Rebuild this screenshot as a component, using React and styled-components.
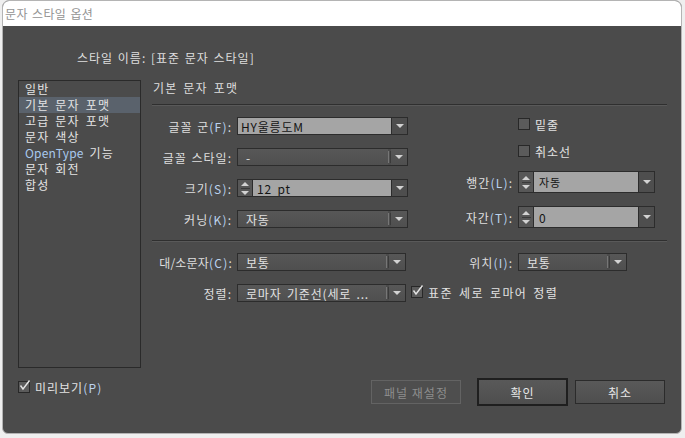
import styled, { createGlobalStyle } from "styled-components";

const GlobalStyle = createGlobalStyle`
  html, body {
    margin: 0;
    padding: 0;
    background: #efefef;
  }
  body {
    font-family: "Noto Sans CJK KR", "Noto Sans", sans-serif;
    font-size: 12px;
  }
  * { box-sizing: border-box; }
`;

const LIST_ITEMS = [
  { label: "일반" },
  { label: "기본 문자 포맷", selected: true },
  { label: "고급 문자 포맷" },
  { label: "문자 색상" },
  { label: "OpenType 기능", latin: "OpenType" },
  { label: "문자 회전" },
  { label: "합성" },
];

const Triangle = ({ up }) => <St.Tri $up={up} />;

const Select = ({ width, height, light, value, pad, small }) => (
  <St.SelectBox $w={width} $h={height}>
    <St.Value $light={light} $pad={pad} $small={small}>
      {value}
    </St.Value>
    {!light && <St.Divider />}
    <St.ArrowBtn $light={light}>
      <Triangle />
    </St.ArrowBtn>
  </St.SelectBox>
);

const Spinner = ({ width, height, value, pad, small }) => (
  <St.SelectBox $w={width} $h={height}>
    <St.Stepper>
      <Triangle up />
      <St.StepLine />
      <Triangle />
    </St.Stepper>
    <St.Value $light $pad={pad} $small={small}>
      {value}
    </St.Value>
    <St.ArrowBtn $light>
      <Triangle />
    </St.ArrowBtn>
  </St.SelectBox>
);

const CheckBox = ({ checked }) => (
  <St.Check>
    {checked && (
      <svg width="14" height="14" viewBox="0 0 14 14">
        <polyline
          points="2.5,6.5 5,10 11.5,1.5"
          fill="none"
          stroke="#e4e4e4"
          strokeWidth="1.4"
        />
      </svg>
    )}
  </St.Check>
);

const App = () => {
  return (
    <>
      <GlobalStyle />
      <St.Window>
        <St.TitleBar>문자 스타일 옵션</St.TitleBar>
        <St.Body>
          <St.NameRow>스타일 이름: [표준 문자 스타일]</St.NameRow>
          <St.Main>
            <St.ListBox>
              {LIST_ITEMS.map((item, idx) => (
                <St.ListItem key={idx} $selected={item.selected}>
                  {item.latin ? (
                    <>
                      <St.Latin>{item.latin}</St.Latin>
                      {item.label.replace(item.latin, "")}
                    </>
                  ) : (
                    item.label
                  )}
                </St.ListItem>
              ))}
            </St.ListBox>
            <St.Panel>
              <St.Heading>기본 문자 포맷</St.Heading>
              <St.Sep />
              <St.TopSection>
                <St.LeftCol>
                  <St.FieldRow>
                    <St.Label>
                      글꼴 군<St.Mn>(F)</St.Mn>:
                    </St.Label>
                    <Select width={171} light value="HY울릉도M" pad={3} />
                  </St.FieldRow>
                  <St.FieldRow>
                    <St.Label>글꼴 스타일:</St.Label>
                    <Select width={171} value="-" pad={8} />
                  </St.FieldRow>
                  <St.FieldRow>
                    <St.Label>
                      크기<St.Mn>(S)</St.Mn>:
                    </St.Label>
                    <Spinner width={171} value="12 pt" pad={4} />
                  </St.FieldRow>
                  <St.FieldRow>
                    <St.Label>
                      커닝<St.Mn>(K)</St.Mn>:
                    </St.Label>
                    <Select width={171} value="자동" pad={8} />
                  </St.FieldRow>
                </St.LeftCol>
                <St.RightCol>
                  <St.CheckRow>
                    <CheckBox />
                    <St.CheckText>밑줄</St.CheckText>
                  </St.CheckRow>
                  <St.CheckRow>
                    <CheckBox />
                    <St.CheckText>취소선</St.CheckText>
                  </St.CheckRow>
                  <St.FieldRow $h={22}>
                    <St.Label $w={110}>
                      행간<St.Mn>(L)</St.Mn>:
                    </St.Label>
                    <Spinner width={137} height={22} value="자동" pad={5} small />
                  </St.FieldRow>
                  <St.FieldRow $h={22}>
                    <St.Label $w={110}>
                      자간<St.Mn>(T)</St.Mn>:
                    </St.Label>
                    <Spinner width={137} height={22} value="0" pad={5} />
                  </St.FieldRow>
                </St.RightCol>
              </St.TopSection>
              <St.Sep $top={12} />
              <St.BottomSection>
                <St.FieldRow>
                  <St.Label $tight>
                    대/소문자<St.Mn>(C)</St.Mn>:
                  </St.Label>
                  <Select width={169} value="보통" pad={8} />
                  <St.Label $w={112}>
                    위치<St.Mn>(I)</St.Mn>:
                  </St.Label>
                  <Select width={109} value="보통" pad={8} />
                </St.FieldRow>
                <St.FieldRow>
                  <St.Label>정렬:</St.Label>
                  <Select width={169} value="로마자 기준선(세로 ..." pad={8} />
                  <St.InlineCheck>
                    <CheckBox checked />
                    <St.CheckText $wide>표준 세로 로마어 정렬</St.CheckText>
                  </St.InlineCheck>
                </St.FieldRow>
              </St.BottomSection>
            </St.Panel>
          </St.Main>
          <St.Footer>
            <St.Preview>
              <CheckBox checked />
              <span>
                미리보기<St.Mn>(P)</St.Mn>
              </span>
            </St.Preview>
            <St.Spacer />
            <St.Button disabled $w={90}>
              패널 재설정
            </St.Button>
            <St.Button $primary $w={91}>
              확인
            </St.Button>
            <St.Button $w={90}>취소</St.Button>
          </St.Footer>
        </St.Body>
      </St.Window>
    </>
  );
};

export default App;

const St = {
  Window: styled.div`
    width: 680px;
    height: 434px;
    margin-left: 2px;
    border: 1px solid #b4b4b4;
    border-radius: 7px 7px 6px 6px;
    overflow: hidden;
    background: #4b4b4b;
    display: flex;
    flex-direction: column;
  `,
  TitleBar: styled.div`
    height: 25px;
    flex-shrink: 0;
    background: #ffffff;
    padding-left: 2px;
    display: flex;
    align-items: center;
    color: #939393;
    font-size: 12px;
    word-spacing: 1px;
    letter-spacing: 0.4px;
  `,
  Body: styled.div`
    flex: 1;
    padding: 24px 14px 0 15px;
    display: flex;
    flex-direction: column;
    color: #dedede;
    letter-spacing: 1px;
    word-spacing: 2px;
  `,
  NameRow: styled.div`
    padding-left: 59px;
    height: 16px;
    line-height: 16px;
    letter-spacing: 1px;
    word-spacing: 1px;
  `,
  Main: styled.div`
    margin-top: 14px;
    height: 288px;
    display: flex;
    gap: 11px;
  `,
  ListBox: styled.ul`
    margin: 0;
    padding: 0;
    list-style: none;
    width: 123px;
    border: 1px solid #2a2a2a;
  `,
  ListItem: styled.li`
    height: 16px;
    line-height: 16px;
    padding-left: 6px;
    letter-spacing: 1.2px;
    white-space: nowrap;
    color: #e4e4e4;
    background: ${({ $selected }) => ($selected ? "#5a626c" : "transparent")};
  `,
  Latin: styled.span`
    color: #a9c9ee;
    letter-spacing: 0.2px;
  `,
  Mn: styled.span`
    color: #bcd3ef;
    letter-spacing: 1.2px;
  `,
  Panel: styled.div`
    flex: 1;
    display: flex;
    flex-direction: column;
  `,
  Heading: styled.div`
    height: 16px;
    line-height: 16px;
    padding-left: 1px;
    letter-spacing: 1.2px;
  `,
  Sep: styled.div`
    margin-top: ${({ $top }) => $top ?? 8}px;
    height: 2px;
    border-top: 1px solid #2f2f2f;
    border-bottom: 1px solid #595959;
  `,
  TopSection: styled.div`
    padding-top: 11px;
    display: flex;
  `,
  LeftCol: styled.div`
    width: 256px;
    display: flex;
    flex-direction: column;
    gap: 13px;
  `,
  RightCol: styled.div`
    flex: 1;
    display: flex;
    flex-direction: column;
    gap: 13px;
  `,
  BottomSection: styled.div`
    padding-top: 11px;
    display: flex;
    flex-direction: column;
    gap: 13px;
  `,
  FieldRow: styled.div`
    height: ${({ $h }) => $h ?? 18}px;
    display: flex;
    align-items: center;
  `,
  Label: styled.div`
    width: ${({ $w }) => $w ?? 85}px;
    flex-shrink: 0;
    padding-right: 5px;
    text-align: right;
    white-space: nowrap;
    word-spacing: 1px;
    letter-spacing: ${({ $tight }) => ($tight ? 0.2 : 1)}px;
    color: #dedede;
  `,
  CheckRow: styled.div`
    height: 14px;
    padding-left: 110px;
    display: flex;
    align-items: center;
    gap: 5px;
  `,
  InlineCheck: styled.div`
    margin-left: 5px;
    display: flex;
    align-items: center;
    gap: 5px;
    margin-top: -2px;
  `,
  CheckText: styled.span`
    white-space: nowrap;
    letter-spacing: ${({ $wide }) => ($wide ? 1.4 : 1)}px;
    color: #e2e2e2;
  `,
  Check: styled.span`
    position: relative;
    width: 12px;
    height: 12px;
    flex-shrink: 0;
    border: 1px solid #282828;
    background: #5b5b5b;

    svg {
      position: absolute;
      left: -1px;
      top: -3px;
    }
  `,
  SelectBox: styled.div`
    width: ${({ $w }) => $w}px;
    height: ${({ $h }) => $h ?? 18}px;
    flex-shrink: 0;
    display: flex;
    border: 1px solid #2c2c2c;
  `,
  Value: styled.div`
    flex: 1;
    min-width: 0;
    padding-left: ${({ $pad }) => $pad ?? 6}px;
    display: flex;
    align-items: center;
    white-space: nowrap;
    overflow: hidden;
    font-size: ${({ $small }) => ($small ? 11 : 12)}px;
    letter-spacing: 0.8px;
    background: ${({ $light }) =>
      $light ? "#a5a5a5" : "linear-gradient(#575757, #4f4f4f)"};
    color: ${({ $light }) => ($light ? "#141414" : "#e2e2e2")};
  `,
  Divider: styled.div`
    width: 3px;
    margin: 2px 0;
    border-left: 1px solid #767676;
    border-right: 1px solid #3a3a3a;
    background: #4f4f4f;
    flex-shrink: 0;
  `,
  ArrowBtn: styled.div`
    width: 16px;
    flex-shrink: 0;
    display: flex;
    align-items: center;
    justify-content: center;
    background: ${({ $light }) =>
      $light ? "#4e4e4e" : "linear-gradient(#575757, #4f4f4f)"};
    border-left: ${({ $light }) => ($light ? "1px solid #2c2c2c" : "none")};
  `,
  Stepper: styled.div`
    width: 15px;
    flex-shrink: 0;
    display: flex;
    flex-direction: column;
    align-items: center;
    justify-content: center;
    gap: 2px;
    background: #575757;
    border-right: 1px solid #2c2c2c;
  `,
  StepLine: styled.div`
    width: 9px;
    height: 1px;
    background: #3a3a3a;
  `,
  Tri: styled.span`
    width: 0;
    height: 0;
    border-left: 4px solid transparent;
    border-right: 4px solid transparent;
    ${({ $up }) =>
      $up ? "border-bottom: 4px solid #d2d2d2;" : "border-top: 4px solid #d2d2d2;"}
  `,
  Footer: styled.div`
    margin-top: 10px;
    height: 31px;
    padding-right: 2px;
    display: flex;
    align-items: flex-start;
  `,
  Preview: styled.label`
    margin-top: 2px;
    height: 14px;
    display: flex;
    align-items: center;
    gap: 5px;
    color: #e2e2e2;
  `,
  Spacer: styled.div`
    flex: 1;
  `,
  Button: styled.button`
    width: ${({ $w }) => $w}px;
    height: ${({ $primary }) => ($primary ? 28 : 24)}px;
    margin-top: ${({ $primary }) => ($primary ? 0 : 2)}px;
    margin-left: ${({ $primary }) => ($primary ? 16 : 7)}px;
    padding: 0;
    font-family: inherit;
    font-size: 12px;
    letter-spacing: 1px;
    color: #e6e6e6;
    background: linear-gradient(#595959, #4e4e4e);
    border: ${({ $primary }) =>
      $primary ? "2px solid #1f1f1f" : "1px solid #2b2b2b"};

    &:first-of-type {
      margin-left: 0;
    }

    &:disabled {
      color: #8d8d8d;
      background: #4e4e4e;
      border: 1px solid #636363;
    }
  `,
};
